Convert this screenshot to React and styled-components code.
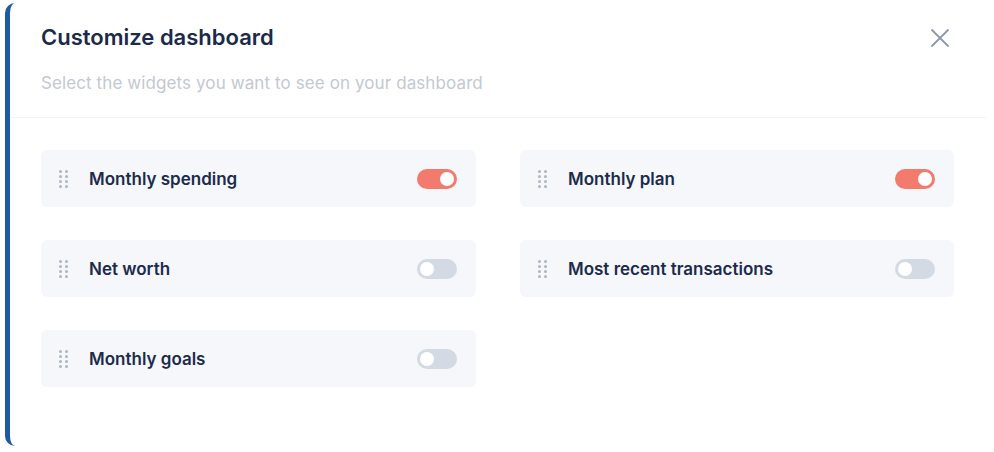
import React, { useState } from "react";
import styled, { createGlobalStyle } from "styled-components";

const GlobalStyle = createGlobalStyle`
  body {
    margin: 0;
    background: #ffffff;
    font-family: Inter, "Noto Sans", sans-serif;
  }
`;

const Page = styled.div`
  width: 994px;
  height: 452px;
  padding: 3px 8px 6px 5px;
  box-sizing: border-box;
  background: #ffffff;
`;

const Modal = styled.div`
  height: 100%;
  box-sizing: border-box;
  background: #ffffff;
  border-left: 5px solid #1f58a5;
  border-radius: 10px 0 0 10px;
  display: flex;
  flex-direction: column;
`;

const Header = styled.div`
  display: flex;
  justify-content: space-between;
  align-items: flex-start;
  padding: 21px 36px 0 31px;
`;

const Title = styled.h2`
  margin: 0;
  font-size: 22px;
  font-weight: 600;
  color: #1b2a4b;
  letter-spacing: 0;
`;

const Subtitle = styled.p`
  margin: 0;
  padding: 23px 31px 24px;
  font-size: 17px;
  letter-spacing: 0.1px;
  color: #c3c8d1;
  border-bottom: 1px solid #f2f4f7;
`;

const CloseButton = styled.button`
  border: none;
  background: none;
  padding: 0;
  margin-top: 4px;
  cursor: pointer;
  display: flex;
`;

const Grid = styled.div`
  display: grid;
  grid-template-columns: 435px 434px;
  column-gap: 44px;
  row-gap: 33px;
  padding: 32px 31px 0;
`;

const Card = styled.div`
  height: 57px;
  display: flex;
  align-items: center;
  padding: 0 19px 0 18px;
  background: #f5f7fa;
  border-radius: 6px;
`;

const Handle = styled.div`
  display: grid;
  grid-template-columns: 3px 3px;
  gap: 2px 3px;
  margin-right: 21px;
`;

const Dot = styled.span`
  width: 3px;
  height: 3px;
  border-radius: 50%;
  background: #aeb5c3;
`;

const Label = styled.span`
  flex: 1;
  font-size: 17px;
  font-weight: 600;
  color: #1c2b4c;
`;

const Toggle = styled.button`
  width: 40px;
  height: 20px;
  border: none;
  border-radius: 10px;
  padding: 3px;
  background: ${({ on }) => (on ? "#f27b6d" : "#d4dae4")};
  display: flex;
  justify-content: ${({ on }) => (on ? "flex-end" : "flex-start")};
  cursor: pointer;
`;

const Knob = styled.span`
  width: 14px;
  height: 14px;
  border-radius: 50%;
  background: #ffffff;
`;

const widgets = [
  { id: "spending", name: "Monthly spending", on: true },
  { id: "plan", name: "Monthly plan", on: true },
  { id: "worth", name: "Net worth", on: false },
  { id: "recent", name: "Most recent transactions", on: false },
  { id: "goals", name: "Monthly goals", on: false },
];

function Widget({ widget, onToggle }) {
  return (
    <Card>
      <Handle>
        {Array.from({ length: 8 }).map((_, i) => (
          <Dot key={i} />
        ))}
      </Handle>
      <Label>{widget.name}</Label>
      <Toggle on={widget.on ? 1 : 0} onClick={() => onToggle(widget.id)}>
        <Knob />
      </Toggle>
    </Card>
  );
}

function App() {
  const [items, setItems] = useState(widgets);

  const toggle = (id) => {
    setItems(items.map((w) => (w.id === id ? { ...w, on: !w.on } : w)));
  };

  return (
    <Page>
      <GlobalStyle />
      <Modal>
        <Header>
          <Title>Customize dashboard</Title>
          <CloseButton aria-label="Close">
            <svg width="20" height="20" viewBox="0 0 20 20">
              <path
                d="M2 2 L18 18 M18 2 L2 18"
                stroke="#8f98aa"
                strokeWidth="1.8"
                strokeLinecap="round"
              />
            </svg>
          </CloseButton>
        </Header>
        <Subtitle>Select the widgets you want to see on your dashboard</Subtitle>
        <Grid>
          {items.map((w) => (
            <Widget key={w.id} widget={w} onToggle={toggle} />
          ))}
        </Grid>
      </Modal>
    </Page>
  );
}

export default App;
